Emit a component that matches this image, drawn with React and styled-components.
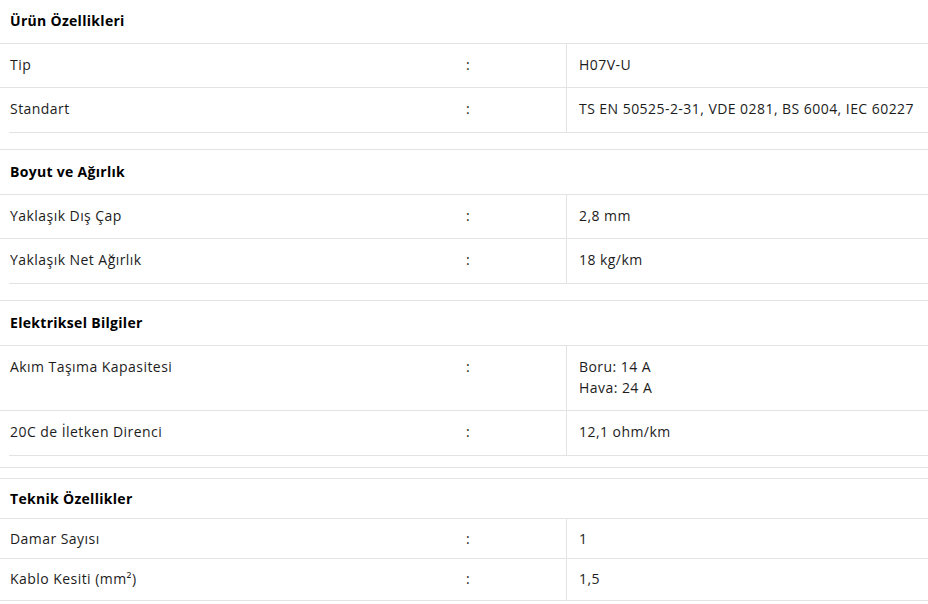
import React from 'react'
import styled, { createGlobalStyle } from 'styled-components'

const colors = {
  text: '#1c1c1c',
  heading: '#000000',
  line: '#e3e3e3',
  white: '#ffffff',
}

const sections = [
  {
    title: 'Ürün Özellikleri',
    gap: '-2px',
    rows: [
      { label: 'Tip', value: ['H07V-U'] },
      { label: 'Standart', value: ['TS EN 50525-2-31, VDE 0281, BS 6004, IEC 60227'] },
    ],
  },
  {
    title: 'Boyut ve Ağırlık',
    rows: [
      { label: 'Yaklaşık Dış Çap', value: ['2,8 mm'] },
      { label: 'Yaklaşık Net Ağırlık', value: ['18 kg/km'] },
    ],
  },
  {
    title: 'Elektriksel Bilgiler',
    rows: [
      { label: 'Akım Taşıma Kapasitesi', value: ['Boru: 14 A', 'Hava: 24 A'] },
      { label: '20C de İletken Direnci', value: ['12,1 ohm/km'] },
    ],
    spacer: true,
  },
  {
    title: 'Teknik Özellikler',
    gap: '10px',
    compact: true,
    rows: [
      { label: 'Damar Sayısı', value: ['1'] },
      { label: 'Kablo Kesiti (mm²)', value: ['1,5'] },
    ],
  },
]

const App = () => {
  return (
    <>
      <GlobalStyle />
      <Page>
        {sections.map((section) => (
          <React.Fragment key={section.title}>
            <Section $gap={section.gap}>
              <Header $compact={section.compact}>{section.title}</Header>
              <Rows>
                {section.rows.map((row) => (
                  <Row key={row.label} $compact={section.compact}>
                    <Cell>{row.label}</Cell>
                    <Cell>:</Cell>
                    <Value>
                      {row.value.map((line) => (
                        <div key={line}>{line}</div>
                      ))}
                    </Value>
                  </Row>
                ))}
              </Rows>
              {!section.compact && <Closing />}
            </Section>
            {section.spacer && <Spacer />}
          </React.Fragment>
        ))}
      </Page>
    </>
  )
}

export default App

const GlobalStyle = createGlobalStyle`
  html, body {
    margin: 0;
    padding: 0;
    background: ${colors.white};
  }
  body {
    font-family: "Open Sans", "Liberation Sans", sans-serif;
    color: ${colors.text};
  }
`

const Page = styled.div`
  width: 928px;
  height: 604px;
  overflow: hidden;
  display: flex;
  flex-direction: column;
`

const Section = styled.div`
  border-top: 1px solid ${colors.line};
  margin-top: ${(p) => p.$gap || '16px'};
`

const Header = styled.div`
  font-size: 14px;
  font-weight: 700;
  letter-spacing: 0.3px;
  color: ${colors.heading};
  line-height: 21px;
  padding: ${(p) => (p.$compact ? '9px 10px' : '11px 10px 12px')};
  border-bottom: 1px solid ${colors.line};
`

const Rows = styled.div`
  display: flex;
  flex-direction: column;
`

const Row = styled.div`
  display: grid;
  grid-template-columns: 456px 110px 1fr;
  font-size: 14px;
  letter-spacing: 0.45px;
  line-height: 21px;
  border-bottom: 1px solid ${colors.line};

  & > div {
    padding: ${(p) => (p.$compact ? '9px 10px' : '10px 10px 12px')};
  }

  &:last-child {
    border-bottom: ${(p) => (p.$compact ? `1px solid ${colors.line}` : 'none')};
  }

  &:last-child > div {
    padding-bottom: ${(p) => (p.$compact ? '11px' : '13px')};
  }
`

const Cell = styled.div``

const Value = styled.div`
  border-left: 1px solid ${colors.line};
  && {
    padding-left: 12px;
  }
`

const Closing = styled.div`
  margin-left: 9px;
  border-top: 1px solid ${colors.line};
`

const Spacer = styled.div`
  margin-top: 11px;
  border-top: 1px solid ${colors.line};
`
